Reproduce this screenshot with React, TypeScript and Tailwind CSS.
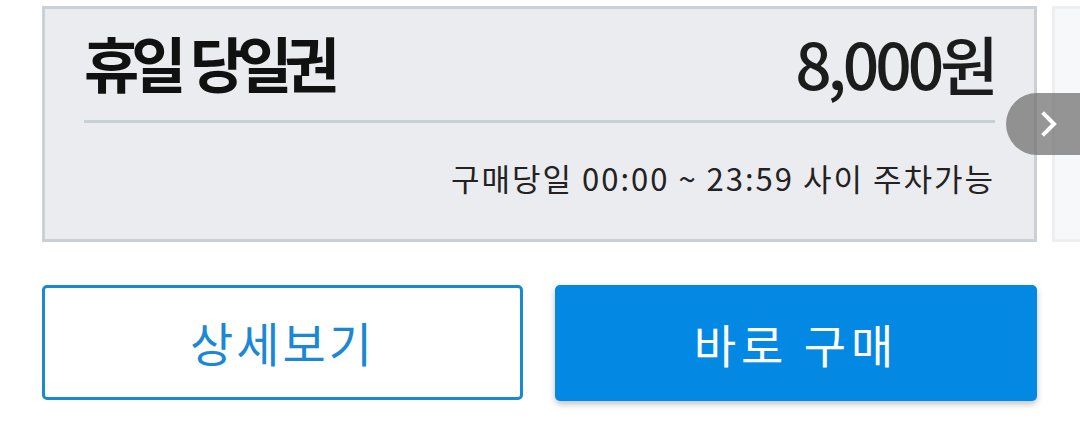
import React from 'react';

const font = { fontFamily: '"Noto Sans CJK KR", "Noto Sans", sans-serif' };

export default function App() {
  return (
    <div className="relative w-[1080px] h-[433px] overflow-hidden bg-white" style={font}>
      <div className="flex gap-[15px] pt-[6px] pl-[42px]">
        <div className="shrink-0 w-[995px] h-[236px] border-[3px] border-[#c9d1d7] bg-[#ebecf0] flex flex-col px-[39px]">
          <div className="flex items-center justify-between h-[111px] pb-[6px]">
            <span className="text-[60px] font-bold tracking-[-8px] [word-spacing:6px] text-[#111] leading-none">휴일 당일권</span>
            <span className="text-[64px] font-medium tracking-[-4px] text-[#1c1c1c] leading-none">8,000원</span>
          </div>
          <div className="h-[3px] bg-[#c7d0d5]" />
          <div className="flex flex-1 items-center justify-end pb-[6px]">
            <span className="text-[31px] tracking-[2px] text-[#222]">구매당일 00:00 ~ 23:59 사이 주차가능</span>
          </div>
        </div>
        <div className="shrink-0 w-[300px] h-[236px] border-[3px] border-[#eceef0] bg-[#f7f8fa]" />
      </div>

      <div className="flex gap-[32px] pl-[42px] pt-[43px]">
        <button className="w-[481px] h-[115px] border-[3px] border-[#1a89d3] rounded-[5px] bg-white text-[#1a88d5] text-[47px] tracking-[3px]">
          상세보기
        </button>
        <button className="w-[482px] h-[116px] rounded-[5px] bg-[#0389e3] text-white text-[46px] tracking-[5px] shadow-[0_3px_6px_rgba(0,0,0,0.25)]">
          바로 구매
        </button>
      </div>

      <div className="absolute left-[1006px] top-[93px] w-[74px] h-[62px] rounded-l-full bg-[rgba(110,110,110,0.72)] flex items-center justify-center pl-[12px]">
        <svg width="18" height="28" viewBox="0 0 18 28" fill="none">
          <path d="M4 4 L14 14 L4 24" stroke="white" strokeWidth="4" strokeLinecap="square" />
        </svg>
      </div>
    </div>
  );
}
